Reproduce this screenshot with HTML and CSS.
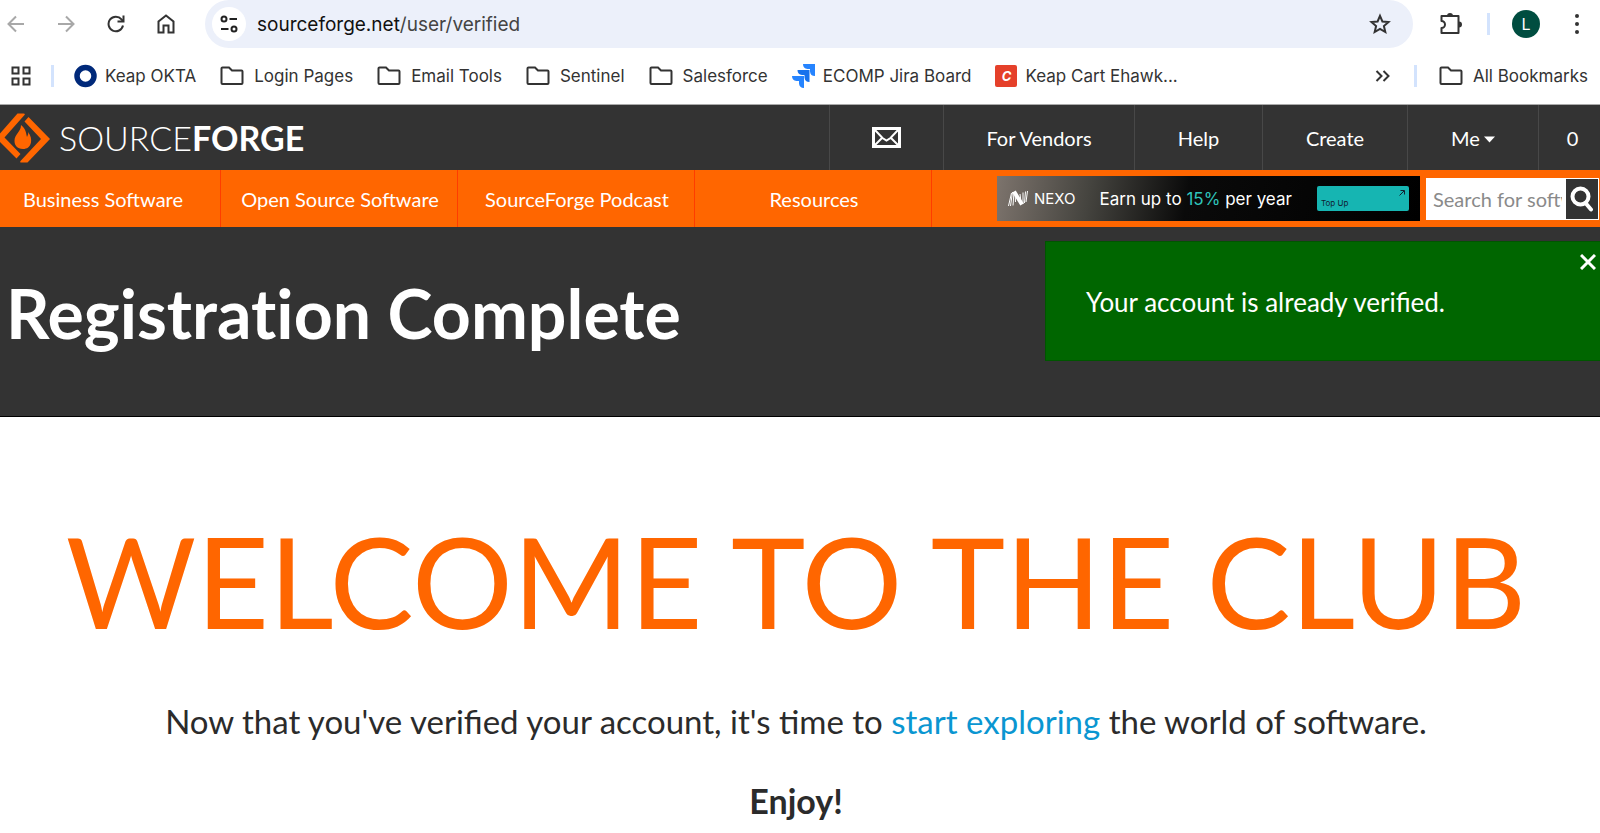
FILE: index.html
```html
<!DOCTYPE html>
<html lang="en">

<head>
   <meta charset="UTF-8">
   <meta name="viewport" content="width=device-width, initial-scale=1.0">
   <title>Registration Complete</title>
   <link rel="stylesheet" href="styles.css">
</head>

<body>
   <!-- shared symbols -->
   <svg class="symbols" aria-hidden="true">
      <symbol id="folder" viewBox="0 0 24 20">
         <path d="M2.5 1.5h6.5l3 3h9.5a1 1 0 0 1 1 1v11.500a1 1 0 0 1-1 1h-19a1 1 0 0 1-1-1v-14.500a1 1 0 0 1 1-1z" fill="none" stroke="#333" stroke-width="2"/>
      </symbol>
   </svg>

   <div class="browser">
      <div class="toolbar">
         <button class="tool" aria-label="Back">
            <svg width="18" height="18" viewBox="0 0 18 18" fill="none" stroke="#a8a8a8" stroke-width="2"><path d="M17 9H2M9 1.500L1.500 9L9 16.500"/></svg>
         </button>
         <button class="tool" aria-label="Forward">
            <svg width="18" height="18" viewBox="0 0 18 18" fill="none" stroke="#a8a8a8" stroke-width="2"><path d="M1 9h15M9 1.500L16.500 9L9 16.500"/></svg>
         </button>
         <button class="tool" aria-label="Reload">
            <svg width="18" height="18" viewBox="0 0 18 18" fill="none" stroke="#333" stroke-width="2"><path d="M16 10.500A7.300 7.300 0 1 1 14.500 4.300L16 6"/><path d="M16.500 0.500V6.500H10.500"/></svg>
         </button>
         <button class="tool" aria-label="Home">
            <svg width="18" height="20" viewBox="0 0 18 20" fill="none" stroke="#333" stroke-width="2"><path d="M1.500 18.500V7.500L9 1.500L16.500 7.500V18.500H11.500V11.500H6.500V18.500z"/></svg>
         </button>
         <div class="address">
            <button class="site-info" aria-label="Site information">
               <svg width="18" height="18" viewBox="0 0 18 18" fill="none" stroke="#222" stroke-width="2"><circle cx="4" cy="4" r="2.500"/><path d="M9.500 4H17M1 14H8.500"/><circle cx="14" cy="14" r="2.500"/></svg>
            </button>
            <span class="url"><b>sourceforge.net</b>/user/verified</span>
            <button class="star" aria-label="Bookmark this page">
               <svg width="22" height="22" viewBox="0 0 22 22" fill="none" stroke="#333" stroke-width="2"><path d="M11 2.800L13.400 8.500L19.500 9L14.900 13L16.300 19L11 15.800L5.700 19L7.100 13L2.500 9L8.600 8.500z"/></svg>
            </button>
         </div>
         <button class="extensions" aria-label="Extensions">
            <svg width="24" height="24" viewBox="0 0 24 24"><path d="M2.500 4h17v17h-17v-5a3.500 3.500 0 0 0 0-7z" fill="none" stroke="#333" stroke-width="2" stroke-linejoin="round"/><path d="M8 4a3 3 0 0 1 6 0zM20 9.500a3 3 0 0 1 0 6z" fill="#333"/></svg>
         </button>
         <span class="divider"></span>
         <button class="avatar" aria-label="Profile">L</button>
         <button class="more" aria-label="Menu">
            <svg width="6" height="22" viewBox="0 0 6 22" fill="#333"><circle cx="3" cy="3" r="2"/><circle cx="3" cy="11" r="2"/><circle cx="3" cy="19" r="2"/></svg>
         </button>
      </div>

      <div class="bookmarks">
         <button class="apps" aria-label="Apps">
            <svg width="20" height="20" viewBox="0 0 20 20" fill="none" stroke="#333" stroke-width="2"><path d="M1.500 1.500h6v6h-6zM12.500 1.500h6v6h-6zM1.500 12.500h6v6h-6zM12.500 12.500h6v6h-6z"/></svg>
         </button>
         <span class="divider"></span>
         <a href="#" class="bookmark first"><svg width="23" height="24" viewBox="0 0 23 24"><circle cx="11.500" cy="12" r="8.500" fill="none" stroke="#00297a" stroke-width="5.500"/></svg>Keap OKTA</a>
         <a href="#" class="bookmark folder"><svg width="24" height="20"><use href="#folder"/></svg>Login Pages</a>
         <a href="#" class="bookmark folder"><svg width="24" height="20"><use href="#folder"/></svg>Email Tools</a>
         <a href="#" class="bookmark folder"><svg width="24" height="20"><use href="#folder"/></svg>Sentinel</a>
         <a href="#" class="bookmark folder"><svg width="24" height="20"><use href="#folder"/></svg>Salesforce</a>
         <a href="#" class="bookmark"><svg width="23" height="24" viewBox="0 0 23 24"><path d="M11 0H23V12A5 5 0 0 1 18 7.500V5H15.500A5 5 0 0 1 11 0z" fill="#2684ff"/><path d="M5.500 6H17.500V18A5 5 0 0 1 12.500 13.500V11H10A5 5 0 0 1 5.500 6z" fill="#1872ec"/><path d="M0 12H12V24A5 5 0 0 1 7 19.500V17H4.500A5 5 0 0 1 0 12z" fill="#2684ff"/></svg>ECOMP Jira Board</a>
         <a href="#" class="bookmark"><span class="cart">C</span>Keap Cart Ehawk...</a>
         <button class="overflow" aria-label="More bookmarks">
            <svg width="15" height="12" viewBox="0 0 15 12" fill="none" stroke="#333" stroke-width="2"><path d="M1.500 1L6.500 6L1.500 11M8.500 1L13.500 6L8.500 11"/></svg>
         </button>
         <span class="divider"></span>
         <a href="#" class="bookmark all"><svg width="24" height="20"><use href="#folder"/></svg>All Bookmarks</a>
      </div>
   </div>

   <header class="site-header">
      <a href="#" class="logo">
         <svg width="50" height="50" viewBox="0 0 50 50" fill="#f60"><path d="M17.500 0.500H23.500Q25.500 0.500 24.500 2L4.500 24.500L20.500 41L16.500 45.500L-4 25z"/><path d="M28.500 4L50 26L27.500 49.500H21.500Q19.500 49.500 20.500 48L41 26L24.500 8.500z"/><path d="M21 12C26 16 26 20 27 24C28 22 28.500 20.500 28 19C31 23 31.500 26 31 29.500C30 34 27 36 23 36C17 36 14.500 32 14.500 28C14.500 21 21 19 21 12z"/></svg>
         <span class="wordmark">SOURCE<b>FORGE</b></span>
      </a>
      <nav class="account-nav">
         <a href="#" class="mail" aria-label="Messages">
            <svg width="29" height="21" viewBox="0 0 29 21" fill="none" stroke="#fff" stroke-width="3"><path d="M1.500 1.500h26v18h-26z"/><path d="M2 2L10.500 11L14.500 13.500L18.500 11L27 2M2 19L10.500 10.500M27 19L18.500 10.500" stroke-width="2"/></svg>
         </a>
         <a href="#" class="vendors">For Vendors</a>
         <a href="#" class="help">Help</a>
         <a href="#" class="create">Create</a>
         <a href="#" class="me">Me<svg width="11" height="11" viewBox="0 0 11 11"><path d="M0 4.500H11L5.500 10.500z" fill="#fff"/></svg></a>
         <a href="#" class="count">0</a>
      </nav>
   </header>

   <div class="site-bar">
      <nav class="main-nav">
         <a href="#">Business Software</a>
         <a href="#">Open Source Software</a>
         <a href="#">SourceForge Podcast</a>
         <a href="#">Resources</a>
      </nav>
      <a href="#" class="ad">
         <svg width="20" height="17" viewBox="0 0 20 17" fill="none" stroke="#fff"><path d="M0.500 16L3.500 3M2.500 16L4.500 2M5 15.500L6 2M7.500 12L7 2" stroke-width="1"/><path d="M6 1.500L14 14.500" stroke-width="4"/><path d="M13 12L12 4M15 14L15 2.500M16.500 13L17.500 1.500M18 12L19.500 1" stroke-width="1"/></svg>
         <span class="ad-brand">NEXO</span>
         <span class="ad-text">Earn up to <em>15%</em> per year</span>
         <span class="ad-button">Top Up<svg width="6" height="6" viewBox="0 0 6 6" fill="none" stroke="#123"><path d="M0.500 5.500L5 1M1.500 0.500H5.500V4.500"/></svg></span>
      </a>
      <form class="search">
         <input type="text" placeholder="Search for software" aria-label="Search for software">
         <button type="button" aria-label="Search">
            <svg width="24" height="26" viewBox="0 0 24 26" fill="none" stroke="#fff"><circle cx="10.500" cy="10.500" r="8" stroke-width="4"/><path d="M15.500 17L21 23.500" stroke-width="4" stroke-linecap="round"/></svg>
         </button>
      </form>
   </div>

   <section class="hero">
      <h1>Registration Complete</h1>
      <div class="notice" role="status">
         <button class="close" aria-label="Close">
            <svg width="16" height="16" viewBox="0 0 16 16" stroke="#fff" stroke-width="3"><path d="M1 1L15 15M15 1L1 15"/></svg>
         </button>
         <p>Your account is already verified.</p>
      </div>
   </section>

   <main class="welcome">
      <h2>WELCOME TO THE CLUB</h2>
      <p>Now that you've verified your account, it's time to <a href="#">start exploring</a> the world of software.</p>
      <p class="enjoy"><b>Enjoy!</b></p>
   </main>
</body>

</html>
```

FILE: styles.css
```css
* {
   box-sizing: border-box;
}

body {
   margin: 0;
   font-family: Lato, sans-serif;
   font-size: 20px;
   color: #2b2b2b;
   background-color: #fff;
   overflow-x: hidden;
}

a {
   color: inherit;
   text-decoration: none;
}

button {
   display: flex;
   align-items: center;
   justify-content: center;
   padding: 0;
   border: 0;
   background: none;
   cursor: pointer;
}

svg {
   display: block;
   flex: none;
}

.symbols {
   position: absolute;
   width: 0;
   height: 0;
}

/* browser bars */
.browser {
   font-family: Inter, sans-serif;
   font-size: 17px;
   color: #333;
   border-bottom: 1px solid #aaa;
}

.toolbar {
   display: flex;
   align-items: center;
   height: 48px;
   padding-right: 20px;
}

.tool {
   width: 32px;
   height: 32px;
   margin-right: 18px;
}

.address {
   flex: 1;
   display: flex;
   align-items: center;
   height: 48px;
   margin-left: 5px;
   padding: 0 22px 0 7px;
   border-radius: 24px;
   background-color: #ecf0fa;
}

.site-info {
   width: 34px;
   height: 34px;
   border-radius: 50%;
   background-color: #fff;
}

.url {
   flex: 1;
   padding-left: 11px;
   font-size: 19px;
   color: #444;
}

.url b {
   font-weight: 400;
   color: #111;
}

.extensions {
   margin-left: 26px;
}

.divider {
   flex: none;
   width: 3px;
   height: 22px;
   background-color: #d3e3fd;
}

.extensions + .divider {
   margin: 0 22px 0 24px;
}

.avatar {
   width: 28px;
   height: 28px;
   border-radius: 50%;
   background-color: #004d40;
   color: #fff;
   font: 16px Inter, sans-serif;
}

.more {
   margin-left: 34px;
}

.bookmarks {
   display: flex;
   align-items: center;
   height: 56px;
   padding: 0 12px 0 11px;
}

.apps {
   margin-right: 20px;
}

.bookmark {
   display: flex;
   align-items: center;
   gap: 8px;
   margin-right: 24px;
   white-space: nowrap;
}

.bookmark.first {
   margin-left: 20px;
}

.bookmark.folder,
.bookmark.all {
   gap: 10px;
}

.bookmark.all {
   margin: 0 0 0 22px;
}

.cart {
   width: 22px;
   height: 22px;
   border-radius: 2px;
   background-color: #e5402a;
   color: #fff;
   font-size: 13px;
   font-style: italic;
   font-weight: 700;
   line-height: 22px;
   text-align: center;
}

.overflow {
   margin: 0 24px 0 auto;
}

/* site header */
.site-header {
   display: flex;
   justify-content: space-between;
   height: 65px;
   background-color: #333;
   color: #fff;
}

.logo {
   display: flex;
   align-items: center;
   gap: 9px;
}

.wordmark {
   font-size: 34px;
   font-weight: 300;
}

.wordmark b {
   font-weight: 700;
}

.account-nav {
   display: flex;
}

.account-nav a {
   display: flex;
   align-items: center;
   justify-content: center;
   border-left: 1px solid #484848;
}

.account-nav .mail {
   width: 114px;
}

.account-nav .vendors {
   width: 191px;
}

.account-nav .help {
   width: 128px;
}

.account-nav .create {
   width: 145px;
}

.account-nav .me {
   gap: 4px;
   width: 131px;
}

.account-nav .count {
   width: 62px;
   padding-left: 6px;
}

.site-bar {
   display: flex;
   align-items: center;
   height: 57px;
   background-color: #f60;
   color: #fff;
}

.main-nav {
   display: flex;
   align-self: stretch;
   margin: 0 auto 0 -16px;
}

.main-nav a {
   display: flex;
   align-items: center;
   justify-content: center;
   width: 237px;
   padding-left: 2px;
   border-right: 1px solid #ff3c00;
}

.ad {
   display: flex;
   align-items: center;
   width: 423px;
   height: 45px;
   padding: 0 11px;
   background: linear-gradient(100deg, #7d746d, #45443f 22%, #0a0a0a 45%, #000);
   font-family: Inter, sans-serif;
   white-space: nowrap;
}

.ad-brand {
   margin-left: 6px;
   font-size: 15px;
}

.ad-text {
   margin-left: 24px;
   font-size: 17px;
}

.ad-text em {
   font-style: normal;
   color: #2fc4bb;
}

.ad-button {
   display: flex;
   align-items: flex-end;
   justify-content: space-between;
   width: 92px;
   height: 25px;
   margin-left: auto;
   padding: 4px;
   border-radius: 2px;
   background-color: #16b5b2;
   color: #123;
   font-size: 8px;
   line-height: 8px;
}

.ad-button svg {
   align-self: flex-start;
}

.search {
   display: flex;
   width: 173px;
   height: 42px;
   margin: 0 1px 0 6px;
   padding: 1px;
   background-color: #fff;
}

.search input {
   flex: 1;
   min-width: 0;
   padding: 0 4px 0 6px;
   border: 0;
   background: none;
   font: 20px Lato, sans-serif;
   color: #333;
}

.search input::placeholder {
   color: #8a8a8a;
}

.search button {
   width: 32px;
   background-color: #333;
}

/* title and notice */
.hero {
   display: flex;
   justify-content: space-between;
   align-items: flex-start;
   height: 190px;
   border-bottom: 1px solid #000;
   background-color: #333;
   color: #fff;
}

.hero h1 {
   margin: 44px 0 0 6px;
   font-size: 68px;
   font-variant-ligatures: none;
   line-height: 84px;
}

.notice {
   width: 555px;
   height: 120px;
   margin-top: 14px;
   padding: 12px 4px 0 40px;
   border: 1px solid #050;
   border-right: 0;
   background-color: #060;
}

.notice .close {
   margin-left: auto;
}

.notice p {
   margin: 16px 0 0;
   font-size: 26px;
   line-height: 32px;
}

.welcome {
   padding: 80px 16px 0 8px;
   text-align: center;
   font-size: 33px;
   line-height: 40px;
}

.welcome h2 {
   margin: 0;
   font-size: 126px;
   font-weight: 400;
   line-height: 168px;
   color: #f60;
}

.welcome p {
   margin: 0 0 40px;
}

.welcome h2 + p {
   margin-top: 36px;
}

.welcome .enjoy {
   font-size: 34px;
}

.welcome a {
   color: #0a96d1;
}
```
